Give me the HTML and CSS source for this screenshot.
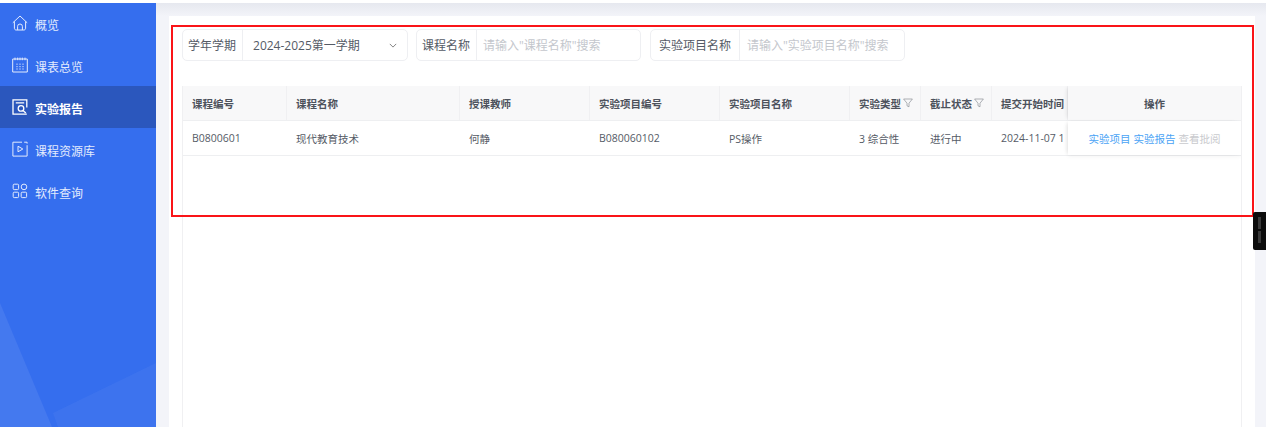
FILE: index.html
```html
<!DOCTYPE html>
<html lang="zh-CN">
<head>
<meta charset="utf-8">
<title>实验报告</title>
<link rel="stylesheet" href="styles.css">
</head>
<body>
<div class="app">
  <aside class="sidebar">
    <svg class="side-bg" width="156" height="424" viewBox="0 0 156 424" aria-hidden="true">
      <polygon points="0,300 52,424 0,424" fill="#5a88f0" fill-opacity=".42"/>
      <polygon points="156,360 53,410 58,424 156,424" fill="#5a88f0" fill-opacity=".22"/>
    </svg>
    <nav class="nav">
      <a class="nav-item">
        <svg class="nav-icon" viewBox="0 0 16 16"><path d="M.8 7.8 8 1l7.2 6.8M2.4 6.4v6.8c0 1.1.7 1.8 1.7 1.8h7.8c1 0 1.7-.7 1.7-1.8V6.4M5.6 15v-3.6a2.4 2.4 0 0 1 4.8 0V15"/></svg>
        <span>概览</span>
      </a>
      <a class="nav-item">
        <svg class="nav-icon" viewBox="0 0 16 16"><path d="M3 .6v2.6M5.7 .6v2.6M8 .6v2.6M10.3 .6v2.6M13 .6v2.6M.7 2h14.6v13H.7zM5 6.6v1.2M8 6.6v1.2M11 6.6v1.2M5 9v1.2M8 9v1.2M11 9v1.2M5 11.4v1.2M8 11.4v1.2M11 11.4v1.2"/></svg>
        <span>课表总览</span>
      </a>
      <a class="nav-item active">
        <svg class="nav-icon bold" viewBox="0 0 16 16"><path d="M14.8 8.5V.9H1v14.2h13.8M3.8 3.8h8.4"/><circle cx="9" cy="9.4" r="2.8"/><path d="m11 11.5 2.8 2.5"/></svg>
        <span>实验报告</span>
      </a>
      <a class="nav-item">
        <svg class="nav-icon" viewBox="0 0 16 16"><path d="M10 1.2H.9v13.9h14.2V4.2M12.2 1.2h2.9v1.4"/><path d="M6 5.2 10.8 8 6 10.8z"/></svg>
        <span>课程资源库</span>
      </a>
      <a class="nav-item">
        <svg class="nav-icon" viewBox="0 0 16 16"><rect x="1.2" y="1.2" width="5.4" height="5.4" rx="1"/><circle cx="12" cy="3.9" r="2.8"/><rect x="1.2" y="9.2" width="5.4" height="5.4" rx="1"/><rect x="9.2" y="9.2" width="5.4" height="5.4" rx="1"/></svg>
        <span>软件查询</span>
      </a>
    </nav>
  </aside>

  <main class="main">
    <div class="topband"></div>
    <section class="panel">
      <div class="filters">
        <div class="field field-term">
          <span class="field-label">学年学期</span>
          <span class="field-value">2024-2025第一学期
            <svg class="chev" viewBox="0 0 10 6"><path d="M1 1l4 4 4-4"/></svg>
          </span>
        </div>
        <div class="field field-course">
          <span class="field-label">课程名称</span>
          <span class="field-hint">请输入"课程名称"搜索</span>
        </div>
        <div class="field field-project">
          <span class="field-label">实验项目名称</span>
          <span class="field-hint">请输入"实验项目名称"搜索</span>
        </div>
      </div>

      <div class="table-wrap">
        <div class="trow thead">
          <div class="cell c1">课程编号</div>
          <div class="cell c2">课程名称</div>
          <div class="cell c3">授课教师</div>
          <div class="cell c4">实验项目编号</div>
          <div class="cell c5">实验项目名称</div>
          <div class="cell c6">实验类型<svg class="funnel" viewBox="0 0 10 10"><path d="M.6 1h8.8L6 5.2v3.6L4 7.8V5.2z"/></svg></div>
          <div class="cell c7">截止状态<svg class="funnel" viewBox="0 0 10 10"><path d="M.6 1h8.8L6 5.2v3.6L4 7.8V5.2z"/></svg></div>
          <div class="cell c8">提交开始时间</div>
          <div class="cell c9 fixed">操作</div>
        </div>
        <div class="trow tbody">
          <div class="cell c1">B0800601</div>
          <div class="cell c2">现代教育技术</div>
          <div class="cell c3">何静</div>
          <div class="cell c4">B080060102</div>
          <div class="cell c5">PS操作</div>
          <div class="cell c6">3 综合性</div>
          <div class="cell c7">进行中</div>
          <div class="cell c8">2024-11-07 1</div>
          <div class="cell c9 fixed"><a class="link">实验项目</a> <a class="link">实验报告</a> <a class="link off">查看批阅</a></div>
        </div>
      </div>
    </section>
  </main>
</div>
<div class="highlight"></div>
<div class="handle"><i></i><i></i></div>
</body>
</html>
```

FILE: styles.css
```css
* { box-sizing: border-box; }
html, body { margin: 0; height: 100%; overflow: hidden; background: #fff; }
body { font-family: "Open Sans", "Noto Sans CJK SC", sans-serif; color: #555b66; }

.app { display: flex; height: 424px; margin-top: 3px; }

.sidebar {
  position: relative;
  flex: 0 0 156px;
  background: #356eee;
  overflow: hidden;
}
.side-bg { position: absolute; left: 0; top: 0; }
.nav { position: relative; margin-top: -1px; }
.nav-item {
  display: flex;
  align-items: center;
  gap: 7px;
  height: 42px;
  padding-left: 12px;
  font-size: 12px;
  color: #e3ebfd;
}
.nav-item span { margin-top: 3px; }
.nav-item.active { background: #2b57bd; color: #fff; font-weight: 700; }
.nav-icon {
  width: 16px;
  height: 16px;
  fill: none;
  stroke: currentColor;
  stroke-width: 1;
}
.nav-icon.bold { stroke-width: 1.3; }

.main { flex: 1; display: flex; flex-direction: column; background: #f3f4f9; min-width: 0; }
.topband { flex: 0 0 13px; background: linear-gradient(#e6e8ef, #f3f4f9); }
.panel {
  flex: 1;
  margin: 0 11px 0 13px;
  padding: 13px 13px 0;
  background: #fff;
  display: flex;
  flex-direction: column;
}

.filters { display: flex; height: 32px; font-size: 12px; }
.field {
  display: flex;
  align-items: stretch;
  border: 1px solid #eeeff2;
  border-radius: 5px;
}
.field-term { width: 226px; margin-right: 8px; }
.field-course { width: 225px; margin-right: 9px; }
.field-project { width: 255px; }
.field-label {
  display: flex;
  align-items: center;
  padding: 0 6px 0 5px;
  border-right: 1px solid #eeeff2;
}
.field-project .field-label { padding: 0 8px 0 8px; }
.field-value {
  flex: 1;
  display: flex;
  align-items: center;
  justify-content: space-between;
  padding: 0 10px;
}
.field-hint { display: flex; align-items: center; padding-left: 6px; color: #c4c7cd; }
.field-project .field-hint { padding-left: 7px; }
.chev { width: 8px; height: 5px; fill: none; stroke: #666; stroke-width: 1; }

.table-wrap {
  flex: 1;
  margin-top: 25px;
  border-left: 1px solid #f0f0f2;
  border-right: 1px solid #f0f0f2;
  font-size: 10.5px;
  width: 1060px;
  overflow: hidden;
}
.trow { display: flex; height: 35px; border-bottom: 1px solid #eeeff1; }
.thead { background: #f8f8f9; font-weight: 700; color: #4d525c; }
.cell {
  display: flex;
  align-items: center;
  padding-left: 9px;
  white-space: pre;
  overflow: hidden;
  border-right: 1px solid transparent;
}
.thead .cell { border-right-color: #f0f0f2; }
.c1 { width: 104px; }
.c2 { width: 173px; }
.c3 { width: 130px; }
.c4 { width: 130px; }
.c5 { width: 130px; }
.c6 { width: 71px; }
.c7 { width: 71px; }
.c8 { width: 76px; }
.c9 { width: 173px; }
.fixed {
  justify-content: center;
  gap: 3px;
  padding-left: 0;
  border-right: 0;
  box-shadow: -3px 0 4px -2px rgba(0, 0, 0, .1);
  position: relative;
}
.tbody .fixed { background: #fff; box-shadow: -3px 0 4px -2px rgba(0, 0, 0, .1), 0 2px 4px rgba(0, 0, 0, .04); }
.funnel { width: 10px; height: 10px; margin-left: 2px; fill: none; stroke: #8d9097; stroke-width: .7; }
.link { color: #4aa3f5; }
.link.off { color: #c9cace; }

.highlight {
  position: absolute;
  left: 171px;
  top: 25px;
  width: 1083px;
  height: 192px;
  border: 2px solid #fa1418;
}
.handle {
  position: absolute;
  left: 1253px;
  top: 212px;
  width: 13px;
  height: 38px;
  padding: 5px 0 0 5px;
  background: #0c0c0c;
  border-radius: 2px 0 0 2px;
}
.handle i { display: block; width: 3px; height: 12px; margin-bottom: 2px; background: #3a3a3a; }
```
